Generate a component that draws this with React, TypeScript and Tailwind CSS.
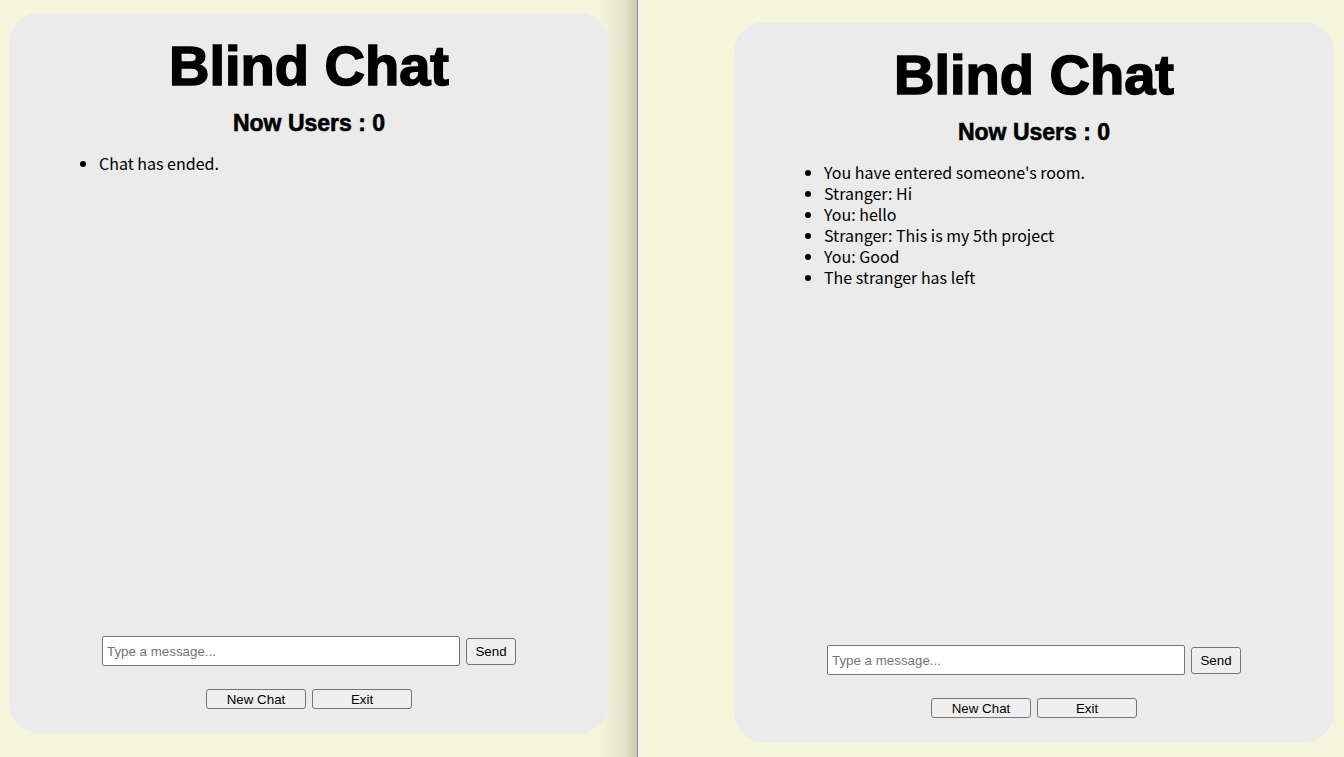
import React from "react";

const sans = { fontFamily: '"Liberation Sans", Arial, sans-serif' };

function Card({ messages }: { messages: string[] }) {
  return (
    <div className="w-[600px] h-[720px] shrink-0 rounded-[30px] bg-[#ebebeb] flex flex-col items-center pt-[21px] pb-[24px] text-black">
      <h1
        className="text-[56px] leading-[64px] font-bold [-webkit-text-stroke:1.6px_black] font-['Liberation_Sans',Arial,sans-serif]"
      >
        Blind Chat
      </h1>
      <h2 className="mt-[11px] text-[23px] leading-[28px] font-bold [-webkit-text-stroke:0.6px_black] font-['Liberation_Sans',Arial,sans-serif]">
        Now Users : 0
      </h2>
      <ul className="self-stretch list-disc pl-[90px] mt-[16px] text-[16px] leading-[21px] font-['Noto_Sans_CJK_KR','Noto_Sans',sans-serif]">
        {messages.map((m, i) => (
          <li key={i}>{m}</li>
        ))}
      </ul>
      <div className="flex-1" />
      <div className="flex items-center gap-[6px]" style={sans}>
        <input
          type="text"
          placeholder="Type a message..."
          className="w-[358px] h-[30px] border border-[#767676] rounded-[2px] bg-white px-[4px] text-[13.33px] text-black placeholder:text-[#757575] outline-none font-['Liberation_Sans',Arial,sans-serif]"
        />
        <button className="w-[50px] h-[27px] pt-[1px] border border-[#767676] rounded-[3px] bg-[#efefef] text-[13.33px] leading-none font-['Liberation_Sans',Arial,sans-serif]">
          Send
        </button>
      </div>
      <div className="mt-[23px] flex items-center gap-[6px]">
        <button className="w-[100px] h-[20px] pt-[1px] border border-[#767676] rounded-[3px] bg-[#efefef] text-[13.33px] leading-none font-['Liberation_Sans',Arial,sans-serif]">
          New Chat
        </button>
        <button className="w-[100px] h-[20px] pt-[1px] border border-[#767676] rounded-[3px] bg-[#efefef] text-[13.33px] leading-none font-['Liberation_Sans',Arial,sans-serif]">
          Exit
        </button>
      </div>
    </div>
  );
}

export default function App() {
  return (
    <div className="w-[1344px] h-[757px] overflow-hidden flex bg-[#f5f5dc]">
      <div className="w-[637px] h-full shrink-0 pl-[9px] pt-[13px] bg-[linear-gradient(to_right,#f5f5dc_600px,#e4e4cc_625px,#cdcdb8_636px)]">
        <Card messages={["Chat has ended."]} />
      </div>
      <div className="w-[1px] h-full shrink-0 bg-[#8f8f86]" />
      <div className="w-[3px] h-full shrink-0 bg-[#f1f1f1]" />
      <div className="flex-1 h-full pl-[93px] pt-[22px]">
        <Card
          messages={[
            "You have entered someone's room.",
            "Stranger: Hi",
            "You: hello",
            "Stranger: This is my 5th project",
            "You: Good",
            "The stranger has left",
          ]}
        />
      </div>
    </div>
  );
}
